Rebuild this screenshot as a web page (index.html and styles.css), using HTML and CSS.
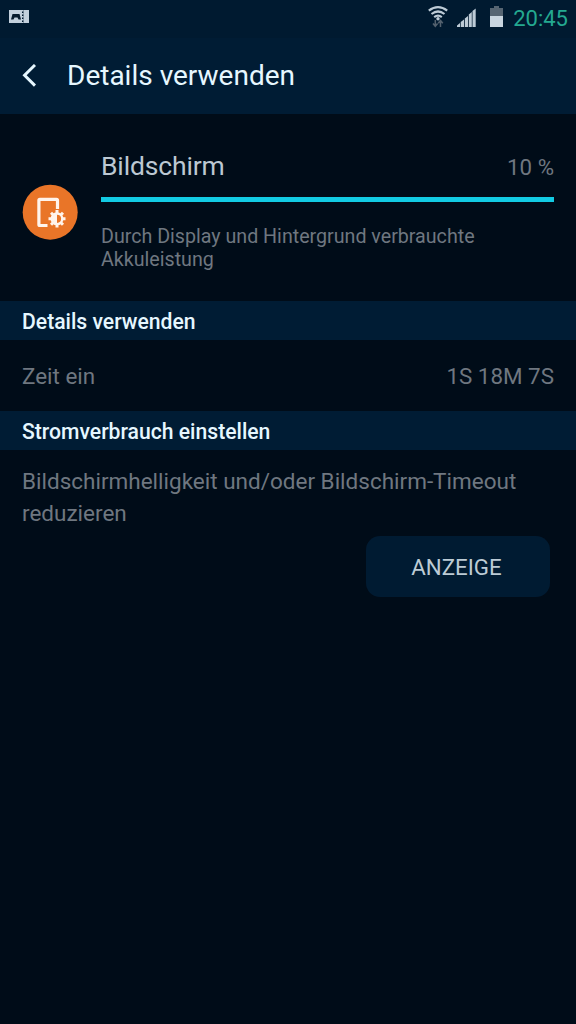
FILE: index.html
```html
<!DOCTYPE html>
<html lang="de">
<head>
<meta charset="utf-8">
<title>Details verwenden</title>
<link rel="stylesheet" href="styles.css">
</head>
<body>
<div class="status-bar">
  <svg class="notification" width="20" height="14" viewBox="0 0 20 14">
    <path fill="#c3d0dc" d="M0 0h13v13H0zM14.500 0H20v13h-5.500z"/>
    <path fill="#061a2c" d="M3.500 4h7l1.500 5.500h-2.500l-1-2H5.500l-1 2H2z"/>
    <path stroke="#c3d0dc" stroke-width="1.500" stroke-dasharray="1.500 1.500" d="M13.700 0v13"/>
  </svg>
  <div class="indicators">
    <svg class="wifi" width="20" height="22" viewBox="0 0 20 22">
      <g fill="none" stroke="#bdcbd6" stroke-width="2.200">
        <path d="M.8 4.700Q10-2.300 19.200 4.700M3.500 8Q10 3 16.500 8M6.200 11.100Q10 8.200 13.800 11.100"/>
      </g>
      <circle cx="10" cy="12.700" r="1.700" fill="#bdcbd6"/>
      <path fill="none" stroke="#53616e" stroke-width="1.500" d="M7.300 14v6M5 17.500l2.300 2.800 2.300-2.800M12.500 21v-6M10.200 17.300l2.300-2.800 2.300 2.800"/>
    </svg>
    <svg class="signal" width="19" height="19" viewBox="0 0 19 19">
      <path fill="#bdcbd6" d="M0 19v-1.500L3 15v4zM3.700 19v-5L7 11.500V19zM7.800 19v-8.500L11 8v11zM11.800 19V6.500L14.800 4v15zM15.500 19V3L18.700.5V19z"/>
    </svg>
    <svg class="battery" width="13" height="21" viewBox="0 0 13 21">
      <path fill="#566572" d="M4 0h5v2h4v8H0V2h4z"/>
      <path fill="#c9d5df" d="M0 10h13v11H0z"/>
    </svg>
    <span class="clock">20:45</span>
  </div>
</div>
<header class="title-bar">
  <svg class="back" width="14" height="24" viewBox="0 0 14 24"><path fill="none" stroke="#e6f7ff" stroke-width="3" d="M13 1 2.600 11.300 13 21.600"/></svg>
  <h1>Details verwenden</h1>
</header>
<section class="usage">
  <svg class="usage-icon" width="56" height="56" viewBox="0 0 56 56">
    <circle cx="28.200" cy="28.200" r="27.500" fill="#e97528"/>
    <path fill="none" stroke="#fff4ec" stroke-width="3.200" stroke-linejoin="round" d="M35.500 25v-8.700q0-1-1-1H17.900q-1 0-1 1v24.200q0 1 1 1h7.600"/>
    <circle cx="35" cy="34.800" r="5.300" fill="none" stroke="#fff4ec" stroke-width="2.400"/>
    <path fill="#fff4ec" d="M35 30v9.600a4.800 4.800 0 0 1 0-9.600z"/>
    <path stroke="#fff4ec" stroke-width="3" d="M35 29.500V26M35 40v3.500M30 34.800h-3.500M40 34.800h3.500M31.300 31l-2.300-2.300M38.700 38.500l2.300 2.300M31.300 38.500l-2.300 2.300M38.700 31l2.300-2.300"/>
  </svg>
  <div class="usage-body">
    <div class="usage-heading"><h2>Bildschirm</h2><span class="percent">10 %</span></div>
    <div class="progress"></div>
    <p class="description">Durch Display und Hintergrund verbrauchte Akkuleistung</p>
  </div>
</section>
<h3 class="section-title">Details verwenden</h3>
<div class="row"><span>Zeit ein</span><span>1S 18M 7S</span></div>
<h3 class="section-title">Stromverbrauch einstellen</h3>
<section class="advice">
  <p>Bildschirmhelligkeit und/oder Bildschirm-Timeout reduzieren</p>
  <button class="action">ANZEIGE</button>
</section>
</body>
</html>
```
FILE: styles.css
```css
* { box-sizing: border-box; }
body { margin: 0; width: 576px; height: 1024px; overflow: hidden; background: #000c18; color: #6f7780; font-family: Roboto, sans-serif; }
h1, h2, h3, p { margin: 0; font-weight: 400; }
svg { display: block; flex: none; }
.status-bar { height: 38px; background: #001a30; display: flex; justify-content: space-between; align-items: flex-start; padding: 0 8px 0 9px; }
.notification { margin-top: 10px; }
.indicators { display: flex; align-items: flex-start; }
.wifi { margin: 6px 9px 0 0; }
.signal { margin: 8px 14px 0 0; }
.battery { margin: 6px 10px 0 0; }
.clock { color: #24a990; font-size: 22px; line-height: 37px; }
.title-bar { height: 76px; background: #001c34; display: flex; align-items: center; padding: 0 22px; }
.back { margin-right: 31px; }
h1 { color: #e6f7ff; font-size: 28px; line-height: 36px; }
.usage { height: 187px; display: flex; padding: 0 22px; }
.usage-icon { margin: 70px 23px 0 0; }
.usage-body { flex: 1; padding-top: 34px; }
.usage-heading { display: flex; justify-content: space-between; align-items: baseline; height: 49px; line-height: 36px; }
h2 { color: #bcc8d2; font-size: 26.500px; letter-spacing: -.15px; }
.percent { font-size: 22.300px; }
.progress { height: 5px; margin-bottom: 1px; width: 453px; background: #12cbe3; }
.description { padding-top: 22px; font-size: 19.650px; line-height: 23px; }
.section-title { height: 39px; padding-left: 22px; background: #001c34; color: #e6f7ff; font-size: 21.150px; font-weight: 500; line-height: 41px; }
.row { height: 71px; display: flex; justify-content: space-between; align-items: center; padding: 0 22px; font-size: 22.400px; }
.advice { display: flex; flex-direction: column; padding: 15px 26px 0 22px; font-size: 22.500px; line-height: 32px; }
.action { align-self: flex-end; margin-top: 7px; width: 184px; height: 61px; border: 0; border-radius: 14px; background: #001b32; color: #bccbd5; font: 22.300px Roboto, sans-serif; padding: 0 3px 0 0; }
```
